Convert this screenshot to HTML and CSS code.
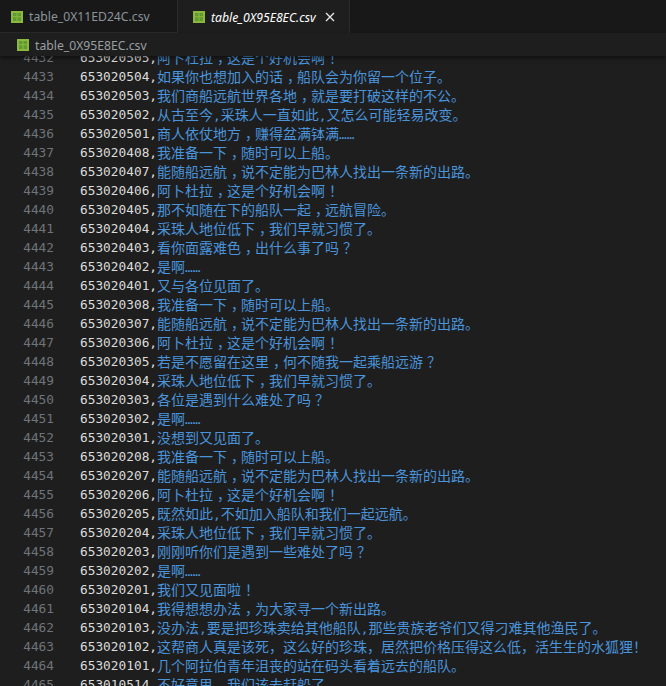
FILE: index.html
```html
<!DOCTYPE html>
<html lang="zh-CN">
<head>
<meta charset="utf-8">
<title>table_0X95E8EC.csv</title>
<link rel="stylesheet" href="styles.css">
</head>
<body>
<div class="window">
  <div class="tabs">
    <div class="tab">
      <svg class="csv" viewBox="0 0 12 12"><rect width="12" height="12" fill="#8cb83e"/><path d="M2 2h3.500v3.200H2zM6.500 2H10v3.200H6.500zM2 6.200h3.500V10H2zM6.500 6.200H10V10H6.500z" fill="#5f9a32"/></svg>
      <span>table_0X11ED24C.csv</span>
    </div>
    <div class="tab active">
      <svg class="csv" viewBox="0 0 12 12"><rect width="12" height="12" fill="#8cb83e"/><path d="M2 2h3.500v3.200H2zM6.500 2H10v3.200H6.500zM2 6.200h3.500V10H2zM6.500 6.200H10V10H6.500z" fill="#5f9a32"/></svg>
      <span>table_0X95E8EC.csv</span>
      <svg class="close" viewBox="0 0 10 10"><path d="M1 1l8 8M9 1l-8 8" stroke="#e8e8e8" stroke-width="1.300" fill="none"/></svg>
    </div>
  </div>
  <div class="crumbs">
    <svg class="csv" viewBox="0 0 12 12"><rect width="12" height="12" fill="#8cb83e"/><path d="M2 2h3.500v3.200H2zM6.500 2H10v3.200H6.500zM2 6.200h3.500V10H2zM6.500 6.200H10V10H6.500z" fill="#5f9a32"/></svg>
    <span>table_0X95E8EC.csv</span>
  </div>
  <div class="editor">
    <div class="lines">
      <div class="row"><span class="ln">4432</span><span class="id">653020505,</span><span class="tx">阿卜杜拉<i>，</i>这是个好机会啊<i>！</i></span></div>
      <div class="row"><span class="ln">4433</span><span class="id">653020504,</span><span class="tx">如果你也想加入的话<i>，</i>船队会为你留一个位子。</span></div>
      <div class="row"><span class="ln">4434</span><span class="id">653020503,</span><span class="tx">我们商船远航世界各地<i>，</i>就是要打破这样的不公。</span></div>
      <div class="row"><span class="ln">4435</span><span class="id">653020502,</span><span class="tx">从古至今<b>,</b>采珠人一直如此<b>,</b>又怎么可能轻易改变。</span></div>
      <div class="row"><span class="ln">4436</span><span class="id">653020501,</span><span class="tx">商人依仗地方<i>，</i>赚得盆满钵满<b>……</b></span></div>
      <div class="row"><span class="ln">4437</span><span class="id">653020408,</span><span class="tx">我准备一下<i>，</i>随时可以上船。</span></div>
      <div class="row"><span class="ln">4438</span><span class="id">653020407,</span><span class="tx">能随船远航<i>，</i>说不定能为巴林人找出一条新的出路。</span></div>
      <div class="row"><span class="ln">4439</span><span class="id">653020406,</span><span class="tx">阿卜杜拉<i>，</i>这是个好机会啊<i>！</i></span></div>
      <div class="row"><span class="ln">4440</span><span class="id">653020405,</span><span class="tx">那不如随在下的船队一起<i>，</i>远航冒险。</span></div>
      <div class="row"><span class="ln">4441</span><span class="id">653020404,</span><span class="tx">采珠人地位低下<i>，</i>我们早就习惯了。</span></div>
      <div class="row"><span class="ln">4442</span><span class="id">653020403,</span><span class="tx">看你面露难色<i>，</i>出什么事了吗<i>？</i></span></div>
      <div class="row"><span class="ln">4443</span><span class="id">653020402,</span><span class="tx">是啊<b>……</b></span></div>
      <div class="row"><span class="ln">4444</span><span class="id">653020401,</span><span class="tx">又与各位见面了。</span></div>
      <div class="row"><span class="ln">4445</span><span class="id">653020308,</span><span class="tx">我准备一下<i>，</i>随时可以上船。</span></div>
      <div class="row"><span class="ln">4446</span><span class="id">653020307,</span><span class="tx">能随船远航<i>，</i>说不定能为巴林人找出一条新的出路。</span></div>
      <div class="row"><span class="ln">4447</span><span class="id">653020306,</span><span class="tx">阿卜杜拉<i>，</i>这是个好机会啊<i>！</i></span></div>
      <div class="row"><span class="ln">4448</span><span class="id">653020305,</span><span class="tx">若是不愿留在这里<i>，</i>何不随我一起乘船远游<i>？</i></span></div>
      <div class="row"><span class="ln">4449</span><span class="id">653020304,</span><span class="tx">采珠人地位低下<i>，</i>我们早就习惯了。</span></div>
      <div class="row"><span class="ln">4450</span><span class="id">653020303,</span><span class="tx">各位是遇到什么难处了吗<i>？</i></span></div>
      <div class="row"><span class="ln">4451</span><span class="id">653020302,</span><span class="tx">是啊<b>……</b></span></div>
      <div class="row"><span class="ln">4452</span><span class="id">653020301,</span><span class="tx">没想到又见面了。</span></div>
      <div class="row"><span class="ln">4453</span><span class="id">653020208,</span><span class="tx">我准备一下<i>，</i>随时可以上船。</span></div>
      <div class="row"><span class="ln">4454</span><span class="id">653020207,</span><span class="tx">能随船远航<i>，</i>说不定能为巴林人找出一条新的出路。</span></div>
      <div class="row"><span class="ln">4455</span><span class="id">653020206,</span><span class="tx">阿卜杜拉<i>，</i>这是个好机会啊<i>！</i></span></div>
      <div class="row"><span class="ln">4456</span><span class="id">653020205,</span><span class="tx">既然如此<b>,</b>不如加入船队和我们一起远航。</span></div>
      <div class="row"><span class="ln">4457</span><span class="id">653020204,</span><span class="tx">采珠人地位低下<i>，</i>我们早就习惯了。</span></div>
      <div class="row"><span class="ln">4458</span><span class="id">653020203,</span><span class="tx">刚刚听你们是遇到一些难处了吗<i>？</i></span></div>
      <div class="row"><span class="ln">4459</span><span class="id">653020202,</span><span class="tx">是啊<b>……</b></span></div>
      <div class="row"><span class="ln">4460</span><span class="id">653020201,</span><span class="tx">我们又见面啦<i>！</i></span></div>
      <div class="row"><span class="ln">4461</span><span class="id">653020104,</span><span class="tx">我得想想办法<i>，</i>为大家寻一个新出路。</span></div>
      <div class="row"><span class="ln">4462</span><span class="id">653020103,</span><span class="tx">没办法<b>,</b>要是把珍珠卖给其他船队<b>,</b>那些贵族老爷们又得刁难其他渔民了。</span></div>
      <div class="row"><span class="ln">4463</span><span class="id">653020102,</span><span class="tx">这帮商人真是该死，这么好的珍珠，居然把价格压得这么低，活生生的水狐狸！</span></div>
      <div class="row"><span class="ln">4464</span><span class="id">653020101,</span><span class="tx">几个阿拉伯青年沮丧的站在码头看着远去的船队。</span></div>
      <div class="row"><span class="ln">4465</span><span class="id">653010514,</span><span class="tx">不好意思<i>，</i>我们该去赶船了。</span></div>
    </div>
  </div>
</div>
</body>
</html>
```
FILE: styles.css
```css
* { box-sizing: border-box; }
html, body { margin: 0; height: 100%; }
body { background: #1e1e1e; overflow: hidden; }
.window { width: 666px; height: 686px; display: flex; flex-direction: column; overflow: hidden; }

.tabs { height: 33px; flex: none; display: flex; background: #181818; font: 12.2px "Noto Sans", sans-serif; }
.tab { display: flex; align-items: center; height: 33px; padding: 1px 0 0 11px; width: 178px; gap: 6px; color: #8b949b; border-bottom: 1px solid #2b2b2b; border-right: 1px solid #2b2b2b; }
.tab.active { width: 172px; padding-left: 15px; background: #1e1e1e; color: #ffffff; font-style: italic; border-bottom: 0; }
.csv { width: 12px; height: 12px; flex: none; }
.close { width: 10px; height: 10px; margin-left: 3px; flex: none; }

.crumbs { height: 23px; flex: none; display: flex; align-items: center; gap: 6px; padding: 1px 0 0 17px; background: #1e1e1e; color: #9a9fa3; font: 12.2px "Noto Sans", sans-serif; box-shadow: 0 2px 4px rgba(0,0,0,.5); position: relative; z-index: 1; }

.editor { flex: 1; min-height: 0; overflow: hidden; }
.lines { margin-top: -8px; }
.row { display: flex; height: 19px; line-height: 19px; white-space: nowrap; }
.ln { width: 54px; flex: none; text-align: right; color: #6f7479; font: 12.8px/19px "DejaVu Sans Mono", monospace; }
.id { margin-left: 26px; flex: none; color: #dcdcdc; font: 12.8px/19px "DejaVu Sans Mono", monospace; }
.tx { color: #4a94dc; font: 14px/19px "Noto Sans CJK SC", sans-serif; }
.tx i { font-style: normal; font-family: "Noto Sans CJK TC", sans-serif; padding-left: 4px; letter-spacing: -4px; }
.tx b { font-weight: normal; font-family: "DejaVu Sans Mono", monospace; font-size: 12.8px; }
```
